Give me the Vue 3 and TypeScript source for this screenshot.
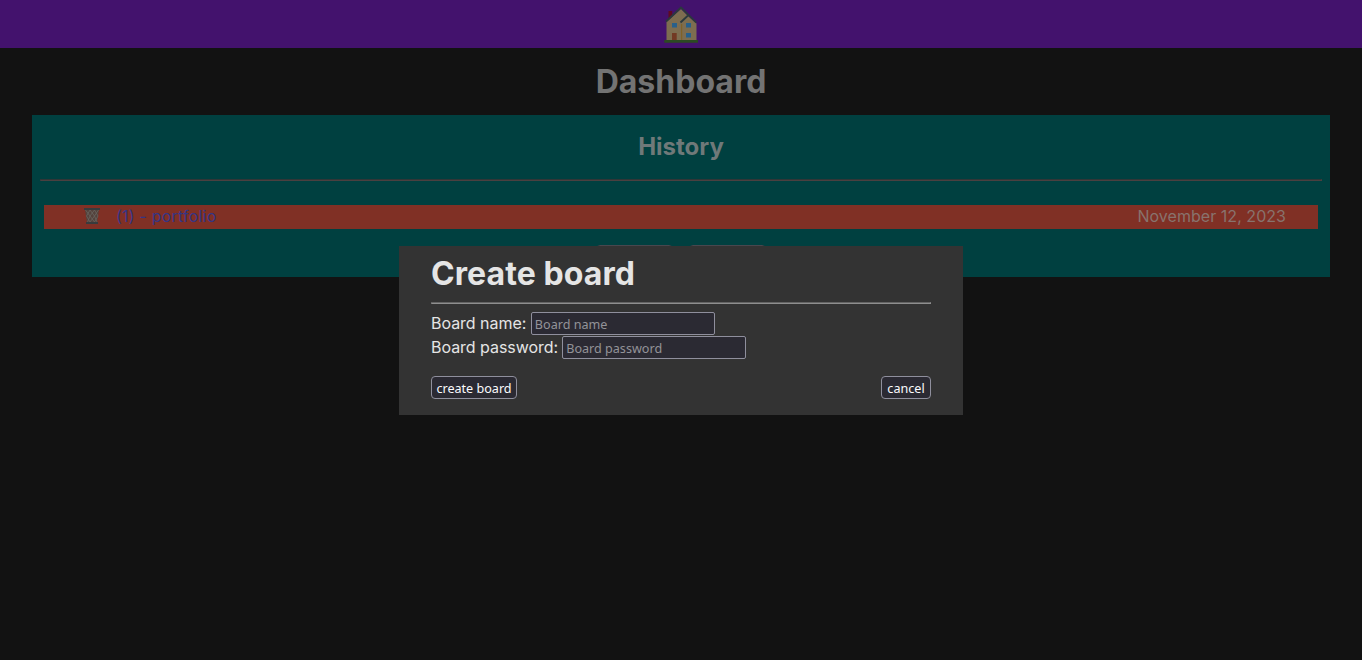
<script setup lang="ts">
import { ref } from 'vue'

interface Board { id: number; name: string; date: string }

const boards: Board[] = [{ id: 1, name: 'portfolio', date: 'November 12, 2023' }]
const boardName = ref('')
const boardPassword = ref('')
const open = ref(true)
</script>

<template>
  <div class="page">
    <nav class="nav">
      <svg class="house" viewBox="0 0 36 38" aria-label="Home">
        <path d="M5.500 6h3.700v8H5.500z" fill="#600a20" />
        <path d="M3.500 17 18 4l7.500 7.500 8 7V35h-30z" fill="#7d6d50" />
        <path d="M18.700 19v16" stroke="#806020" stroke-width="1" />
        <path d="M3 16.500 18 2.500 33.300 17.700" fill="none" stroke="#2b393d" stroke-width="1.800" />
        <path d="m17.500 17.500 7.500-7" fill="none" stroke="#2b393d" stroke-width="1.800" />
        <path d="M9 18h5v4.600H9zM23 18h5v4.600h-5zM23 28h5v4.600h-5z" fill="#28608a" />
        <path d="M9 28h4.700v7H9z" fill="#723923" />
        <path d="M1.300 35H35v2.800H1.300z" fill="#2c4a22" />
      </svg>
    </nav>
    <h1 class="title">Dashboard</h1>
    <section class="history">
      <h2>History</h2>
      <hr />
      <ul class="list">
        <li v-for="board in boards" :key="board.id">
          <svg class="trash" viewBox="0 0 16 16" aria-label="Delete">
            <path d="M1 2h14l-1.800 12H2.800z" fill="#54423c" />
            <path d="M1.500 2 6 8l-2.500 6M6 2 2.500 8 6 14M6 2l4.500 6L6 14M10.500 2 6 8l4.500 6M10.500 2 14 8l-3.500 6M14.500 2l-4 6 2.500 6" fill="none" stroke="#68645f" stroke-width=".8" />
            <path d="M0 0h16v2H0zM2 14h12v2H2z" fill="#383b3d" />
          </svg>
          <a class="link">({{ board.id }}) - {{ board.name }}</a>
          <span class="date">{{ board.date }}</span>
        </li>
      </ul>
      <div class="actions"><i></i><i></i></div>
    </section>

    <div v-if="open" class="modal">
      <h1>Create board</h1>
      <hr />
      <div class="field"><label for="name">Board name:</label><input id="name" v-model="boardName" class="name" placeholder="Board name" /></div>
      <div class="field"><label for="pass">Board password:</label><input id="pass" v-model="boardPassword" type="password" placeholder="Board password" /></div>
      <div class="buttons">
        <button class="create">create board</button>
        <button class="cancel" @click="open = false">cancel</button>
      </div>
    </div>
  </div>
</template>

<style>
body { margin: 0; background: #121212; }
</style>

<style scoped>
.page { min-height: 660px; font: 16px/24px Inter, sans-serif; color: #737373; overflow: hidden; }
.nav { height: 48px; background: #43126d; display: flex; justify-content: center; }
.house { width: 36px; height: 38px; margin-top: 5px; }
h1, h2, ul { margin: 0; padding: 0; }
h1 { font-size: 32px; line-height: 35px; font-weight: 700; }
.title { margin: 16px 0; text-align: center; }
.history { box-sizing: border-box; height: 162px; margin: 0 32px; padding: 0 8px; background: #004040; overflow: hidden; }
h2 { margin-top: 18px; font-size: 24px; line-height: 27px; text-align: center; color: #6f7979; }
hr { height: 0; border: 1px solid; box-sizing: content-box; }
.history hr { margin: 19px 0 24px; border-color: #303637 #4a4040 #4a4040 #303637; }
.list { list-style: none; margin: 0 4px; }
.list li { box-sizing: border-box; height: 24px; display: flex; align-items: center; padding: 0 32px 2px 40px; background: #803025; line-height: 22px; }
.trash { width: 16px; height: 16px; }
.link { margin-left: 16px; color: #353585; letter-spacing: .2px; }
.date { margin-left: auto; color: #88736d; letter-spacing: .04px; }
.actions { display: flex; justify-content: center; gap: 16px; margin-top: 16px; }
.actions i { box-sizing: border-box; width: 77px; height: 23px; border: 1px solid #48474e; border-radius: 4px; background: #171519; }
.modal { position: fixed; top: 246px; left: 399px; box-sizing: border-box; width: 564px; height: 169px; padding: 10px 32px 16px; background: #333; color: #e5e5e5; }
.modal h1 { letter-spacing: .08px; }
.modal hr { margin: 11px 0 8px; border-color: #646464 #8e8e8e #8e8e8e #646464; }
.field { height: 24px; display: flex; align-items: flex-start; }
label { line-height: 23px; letter-spacing: -.03px; }
input, button { box-sizing: border-box; height: 23px; font: 12.6px "Noto Sans", sans-serif; background: #2b2a33; border: 1px solid #8f8f9d; color: #fbfbfe; }
input { width: 184px; margin-left: 4px; padding: 1px 3px 0; border-radius: 2px; outline: 0; }
.name { margin-left: 5px; padding-left: 2.5px; }
input::placeholder { color: #939398; opacity: 1; }
.buttons { display: flex; justify-content: space-between; margin-top: 16px; }
button { padding: 2px 0 0; border-radius: 4px; line-height: 19px; }
.create { width: 86px; }
.cancel { width: 50px; }
</style>
